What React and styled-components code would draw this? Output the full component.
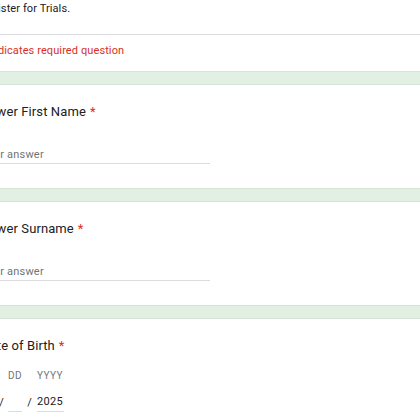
import React from 'react'
import styled, { createGlobalStyle } from 'styled-components'

const GlobalStyle = createGlobalStyle`
  html, body {
    margin: 0;
    padding: 0;
    background: #e2f0e3;
    overflow: hidden;
    font-family: Roboto, "Liberation Sans", Arial, sans-serif;
  }
`

const Page = styled.div`
  display: flex;
  flex-direction: column;
  gap: 12px;
  width: 520px;
  margin-left: -43px;
  margin-top: -9px;
`

const Card = styled.div`
  background: #ffffff;
  border-top: 1px solid #d6e4d7;
  border-bottom: 1px solid #d6e4d7;
  padding: ${props => props.$pad || '17px 24px 24px'};
`

const HeaderCard = styled.div`
  background: #ffffff;
  border-bottom: 1px solid #d6e4d7;
`

const Description = styled.div`
  padding: 10px 24px 17px 22px;
  font-size: 11px;
  line-height: 16px;
  color: #202124;
  letter-spacing: 0.1px;
`

const Divider = styled.div`
  height: 1px;
  background: #dadce0;
`

const Required = styled.div`
  padding: 8px 24px 12px;
  font-size: 11px;
  line-height: 16px;
  color: #d93025;
  letter-spacing: 0.1px;
`

const Title = styled.div`
  font-family: Roboto, "Liberation Sans", Arial, sans-serif;
  font-size: 13px;
  line-height: 20px;
  color: #202124;
  letter-spacing: 0.1px;
`

const Star = styled.span`
  color: #d93025;
  margin-left: 4px;
`

const AnswerInput = styled.input`
  display: block;
  box-sizing: content-box;
  margin-top: 24px;
  width: 229px;
  height: 17px;
  padding: 0;
  border: 0;
  border-bottom: 1px solid #dadce0;
  outline: none;
  font-family: Roboto, "Liberation Sans", Arial, sans-serif;
  font-size: 11px;
  color: #202124;
  background: transparent;
  letter-spacing: 0.2px;

  &::placeholder {
    color: #70757a;
  }
`

const DateGrid = styled.div`
  display: grid;
  grid-template-columns: 22px 13px 14px 15px 27px;
  grid-template-rows: 20px 24px;
  row-gap: 5px;
  margin-top: 9px;
  margin-left: -8px;
  align-items: center;
`

const DateLabel = styled.div`
  font-size: 10px;
  color: #70757a;
  letter-spacing: 0.4px;
`

const Slash = styled.div`
  font-size: 11px;
  color: #202124;
  text-align: center;
`

const DateValue = styled.div`
  height: 19px;
  line-height: 19px;
  border-bottom: 1px solid #dadce0;
  font-size: 11px;
  color: #202124;
  letter-spacing: 0.3px;
`

function Question({ title }) {
  return (
    <Card>
      <Title>
        {title}
        <Star>*</Star>
      </Title>
      <AnswerInput placeholder="Your answer" />
    </Card>
  )
}

export default function App() {
  return (
    <>
      <GlobalStyle />
      <Page>
        <HeaderCard>
          <Description>Register for Trials.</Description>
          <Divider />
          <Required>* Indicates required question</Required>
        </HeaderCard>
        <Question title="Rower First Name" />
        <Question title="Rower Surname" />
        <Card $pad="17px 24px 40px">
          <Title>
            Date of Birth
            <Star>*</Star>
          </Title>
          <DateGrid>
            <DateLabel>MM</DateLabel>
            <div />
            <DateLabel>DD</DateLabel>
            <div />
            <DateLabel>YYYY</DateLabel>
            <DateValue />
            <Slash>/</Slash>
            <DateValue />
            <Slash>/</Slash>
            <DateValue>2025</DateValue>
          </DateGrid>
        </Card>
      </Page>
    </>
  )
}
